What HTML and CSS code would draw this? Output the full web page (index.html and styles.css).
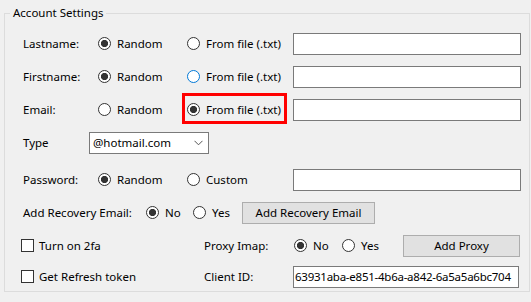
FILE: index.html
```html
<!DOCTYPE html>
<html lang="en">
<head>
    <meta charset="UTF-8">
    <title>Account Settings</title>
    <link rel="stylesheet" href="styles.css">
</head>
<body>
    <fieldset class="group">
        <legend>Account Settings</legend>

        <div class="row">
            <span class="field-label">Lastname:</span>
            <label class="opt opt-first"><input type="radio" name="lastname" checked>Random</label>
            <label class="opt opt-second"><input type="radio" name="lastname">From file (.txt)</label>
            <input type="text" class="text-box">
        </div>

        <div class="row">
            <span class="field-label">Firstname:</span>
            <label class="opt opt-first"><input type="radio" name="firstname" checked>Random</label>
            <label class="opt opt-second"><input type="radio" name="firstname" class="hover">From file (.txt)</label>
            <input type="text" class="text-box">
        </div>

        <div class="row">
            <span class="field-label">Email:</span>
            <label class="opt opt-first"><input type="radio" name="email">Random</label>
            <label class="opt opt-second marked"><input type="radio" name="email" checked>From file (.txt)</label>
            <input type="text" class="text-box">
        </div>

        <div class="row">
            <span class="field-label short">Type</span>
            <div class="combo">
                <span>@hotmail.com</span>
                <svg width="9" height="6" viewBox="0 0 9 6"><path d="M0.5 0.8 L4.5 4.8 L8.5 0.8" fill="none" stroke="#555" stroke-width="1"/></svg>
            </div>
        </div>

        <div class="row row-gap">
            <span class="field-label">Password:</span>
            <label class="opt opt-first"><input type="radio" name="password" checked>Random</label>
            <label class="opt opt-second"><input type="radio" name="password">Custom</label>
            <input type="text" class="text-box">
        </div>

        <div class="row">
            <span class="field-label recovery">Add Recovery Email:</span>
            <label class="opt opt-no"><input type="radio" name="recovery" checked>No</label>
            <label class="opt opt-yes"><input type="radio" name="recovery">Yes</label>
            <button class="btn btn-recovery">Add Recovery Email</button>
        </div>

        <div class="row">
            <label class="check-cell"><input type="checkbox">Turn on 2fa</label>
            <span class="field-label wide">Proxy Imap:</span>
            <label class="opt opt-proxy-no"><input type="radio" name="proxy" checked>No</label>
            <label class="opt opt-proxy-yes"><input type="radio" name="proxy">Yes</label>
            <button class="btn btn-proxy">Add Proxy</button>
        </div>

        <div class="row row-last">
            <label class="check-cell"><input type="checkbox">Get Refresh token</label>
            <span class="field-label wide">Client ID:</span>
            <input type="text" class="text-box client-id" value="63931aba-e851-4b6a-a842-6a5a5a6bc704">
        </div>
    </fieldset>
</body>
</html>
```

FILE: styles.css
```css
body {
    margin: 0;
    background-color: #f0f0f0;
    font-family: "Noto Sans", "Open Sans", sans-serif;
    font-size: 11.5px;
    color: #000;
}

.group {
    box-sizing: border-box;
    height: 287px;
    margin: 5px 1px 0 4px;
    padding: 6px 0 0 18px;
    border: 1px solid #dcdcdc;
}

.group legend {
    margin-left: -13px;
    padding: 0 3px;
    line-height: 16px;
}

.row {
    display: flex;
    align-items: center;
    height: 33px;
}

.row-gap {
    margin-top: 4px;
}

.row-last {
    margin-top: -2px;
}

.field-label {
    width: 75px;
    flex-shrink: 0;
}

.field-label.short {
    width: 66px;
}

.field-label.recovery {
    width: 123px;
}

.field-label.wide {
    width: 89px;
}

.opt {
    display: flex;
    align-items: center;
    flex-shrink: 0;
    position: relative;
}

.opt-first { width: 89px; }
.opt-second { width: 106px; }
.opt-no { width: 47px; }
.opt-yes { width: 49px; }
.opt-proxy-no { width: 48px; margin-left: 1px; }
.opt-proxy-yes { width: 61px; }

.opt input {
    appearance: none;
    -webkit-appearance: none;
    box-sizing: border-box;
    width: 13px;
    height: 13px;
    margin: 0 6px 0 0;
    border: 1px solid #333;
    border-radius: 50%;
    background: #fff;
}

.opt input:checked {
    background: radial-gradient(circle, #333 0 3.3px, #fff 3.9px);
}

.opt input.hover {
    border-color: #0078d7;
}

/* highlight drawn over the email "From file" option */
.opt.marked::after {
    content: "";
    position: absolute;
    left: -5px;
    top: -7px;
    width: 105px;
    height: 31px;
    box-sizing: border-box;
    border: 3px solid #f00;
}

.opt.marked {
    height: 19px;
}

.text-box {
    box-sizing: border-box;
    width: 228px;
    height: 22px;
    margin: 0;
    padding: 0 1px;
    border: 1px solid #7a7a7a;
    background: #fff;
    font-family: inherit;
    font-size: 11.5px;
    color: #000;
    outline: none;
}

.text-box.client-id {
    width: 226px;
    letter-spacing: -0.25px;
}

.combo {
    box-sizing: border-box;
    width: 120px;
    height: 22px;
    display: flex;
    align-items: center;
    justify-content: space-between;
    padding: 0 5px 0 3px;
    border: 1px solid #7a7a7a;
    background: #fff;
}

.btn {
    box-sizing: border-box;
    height: 22px;
    margin: 0;
    padding: 0;
    border: 1px solid #adadad;
    background: #e1e1e1;
    font-family: inherit;
    font-size: 11.5px;
    color: #000;
}

.btn-recovery { width: 133px; }
.btn-proxy { width: 117px; }

.check-cell {
    display: flex;
    align-items: center;
    width: 181px;
    flex-shrink: 0;
}

.check-cell input {
    appearance: none;
    -webkit-appearance: none;
    box-sizing: border-box;
    width: 13px;
    height: 13px;
    margin: 0 5px 0 -2px;
    border: 1px solid #333;
    background: #fff;
}
```
